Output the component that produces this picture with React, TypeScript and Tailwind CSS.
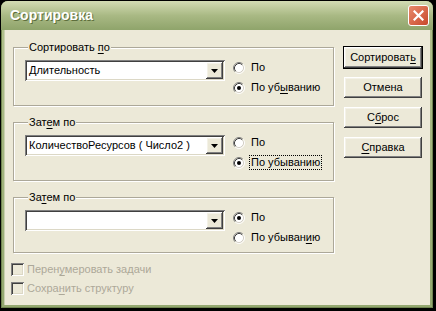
import * as React from "react"

const raised =
    "shadow-[inset_-1px_-1px_#404040,inset_1px_1px_#ffffff,inset_-2px_-2px_#808080,inset_2px_2px_#f4f2e8]"
const sunken =
    "shadow-[inset_1px_1px_#808080,inset_-1px_-1px_#ffffff,inset_2px_2px_#404040,inset_-2px_-2px_#dcd8c6]"

function Radio({ checked }: { checked?: boolean }) {
    return (
        <svg width="12" height="12" viewBox="0 0 12 12" className="shrink-0">
            <circle cx="6" cy="6" r="4.5" fill="#ffffff" />
            <path d="M2.11 9.89 A5.5 5.5 0 0 1 9.89 2.11" fill="none" stroke="#808080" />
            <path d="M9.89 2.11 A5.5 5.5 0 0 1 2.11 9.89" fill="none" stroke="#ffffff" />
            <path d="M2.82 9.18 A4.5 4.5 0 0 1 9.18 2.82" fill="none" stroke="#404040" />
            <path d="M9.18 2.82 A4.5 4.5 0 0 1 2.82 9.18" fill="none" stroke="#d4d0c8" />
            {checked && <circle cx="6" cy="6" r="2" fill="#000000" />}
        </svg>
    )
}

// label with one underlined letter (mnemonic)
function Mn({ text, at }: { text: string; at: number }) {
    if (at < 0) return <>{text}</>
    return (
        <>
            {text.slice(0, at)}
            <span className="underline underline-offset-[2px]">{text[at]}</span>
            {text.slice(at + 1)}
        </>
    )
}

function RadioRow({ checked, text, at, focus }: { checked?: boolean; text: string; at: number; focus?: boolean }) {
    return (
        <div className="flex h-[15px] items-center gap-[4px] whitespace-nowrap">
            <Radio checked={checked} />
            <span className={focus ? "border border-dotted border-black px-[1px] leading-[13px]" : "px-[2px] leading-[13px]"}>
                <Mn text={text} at={at} />
            </span>
        </div>
    )
}

function Combo({ value }: { value: string }) {
    return (
        <div className={`flex h-[21px] w-[200px] shrink-0 items-center bg-white p-[2px] ${sunken}`}>
            <span className="flex-1 truncate pl-[2px]">{value}</span>
            <div className={`flex h-[17px] w-[17px] items-center justify-center bg-[#ECE9D8] ${raised}`}>
                <svg width="7" height="4" viewBox="0 0 7 4">
                    <path d="M0 0h7L3.5 4z" fill="#000000" />
                </svg>
            </div>
        </div>
    )
}

function Group({
    label,
    at,
    value,
    first,
    firstAt,
    second,
    secondAt,
    up,
    focus,
    short,
}: {
    label: string
    at: number
    value: string
    first: string
    firstAt: number
    second: string
    secondAt: number
    up?: boolean
    focus?: boolean
    short?: boolean
}) {
    return (
        <fieldset
            className={`${short ? "h-[62px]" : "h-[65px]"} w-[318px] border border-[#ACA899] px-[11px] shadow-[inset_1px_1px_#ffffff,1px_1px_#ffffff]`}
        >
            <legend className="ml-[3px] bg-[#ECE9D8] px-[1px] leading-[13px]">
                <Mn text={label} at={at} />
            </legend>
            <div className="mt-[6px] flex items-start gap-[8px]">
                <Combo value={value} />
                <div className="flex flex-col gap-[5px]">
                    <RadioRow checked={up} text={first} at={firstAt} />
                    <RadioRow checked={!up} text={second} at={secondAt} focus={focus} />
                </div>
            </div>
        </fieldset>
    )
}

function Button({ children, isDefault }: { children: React.ReactNode; isDefault?: boolean }) {
    return (
        <div className={isDefault ? "border border-black" : "border border-transparent"}>
            <div className={`flex h-[21px] w-[78px] items-center justify-center bg-[#ECE9D8] ${raised}`}>{children}</div>
        </div>
    )
}

function Check({ text, at }: { text: string; at: number }) {
    return (
        <div className="flex h-[19px] items-center gap-[3px] whitespace-nowrap">
            <div className={`h-[13px] w-[13px] bg-[#ECE9D8] ${sunken}`} />
            <span className="text-[#ACA899]">
                <Mn text={text} at={at} />
            </span>
        </div>
    )
}

export default function App() {
    return (
        <div className="h-[311px] w-[436px] overflow-hidden bg-black pl-[1px] pt-[1px] font-['Tahoma','Liberation_Sans',sans-serif] text-[11px] text-black">
            <div className="flex h-[307px] w-[432px] flex-col rounded-t-[7px] bg-gradient-to-b from-[#b3c28e] to-[#94a870] shadow-[inset_1px_0_#6f8450,inset_-1px_0_#6f8450,inset_0_-1px_#6f8450]">
                {/* title bar */}
                <div className="flex h-[29px] shrink-0 items-center justify-between rounded-t-[7px] bg-gradient-to-b from-[#d4dcb4] via-[#a9b984] to-[#8fa46b] pl-[9px] pr-[4px]">
                    <span className="font-['Liberation_Sans',sans-serif] text-[14px] font-bold text-white [text-shadow:1px_1px_#5d6e3c]">
                        Сортировка
                    </span>
                    <div className="flex h-[21px] w-[21px] items-center justify-center rounded-[3px] border border-white bg-gradient-to-br from-[#e88a6c] to-[#c8472a]">
                        <svg width="11" height="11" viewBox="0 0 11 11">
                            <path d="M1.5 1.5l8 8M9.5 1.5l-8 8" stroke="#ffffff" strokeWidth="2.2" strokeLinecap="square" />
                        </svg>
                    </div>
                </div>

                {/* client area */}
                <div className="mx-[3px] mb-[3px] flex flex-1 bg-[#ECE9D8] pl-[9px] pr-[6px] pt-[11px] shadow-[inset_1px_0_#c9d1b0]">
                    <div className="flex w-[322px] flex-col gap-[10px]">
                        <Group
                            label="Сортировать по"
                            at={12}
                            value="Длительность"
                            first="По"
                            firstAt={-1}
                            second="По убыванию"
                            secondAt={5}
                        />
                        <Group
                            label="Затем по"
                            at={3}
                            value="КоличествоРесурсов ( Число2 )"
                            first="По"
                            firstAt={-1}
                            second="По убыванию"
                            secondAt={-1}
                            focus
                        />
                        <Group
                            label="Затем по"
                            at={2}
                            value=""
                            first="По"
                            firstAt={-1}
                            second="По убыванию"
                            secondAt={9}
                            up
                            short
                        />
                        <div className="-ml-[2px] -mt-[3px] flex flex-col">
                            <Check text="Перенумеровать задачи" at={5} />
                            <Check text="Сохранить структуру" at={5} />
                        </div>
                    </div>
                    <div className="ml-[8px] flex flex-col gap-[7px] pt-[5px]">
                        <Button isDefault>
                            <Mn text="Сортировать" at={10} />
                        </Button>
                        <Button>Отмена</Button>
                        <Button>
                            <Mn text="Сброс" at={1} />
                        </Button>
                        <Button>
                            <Mn text="Справка" at={0} />
                        </Button>
                    </div>
                </div>
            </div>
        </div>
    )
}
